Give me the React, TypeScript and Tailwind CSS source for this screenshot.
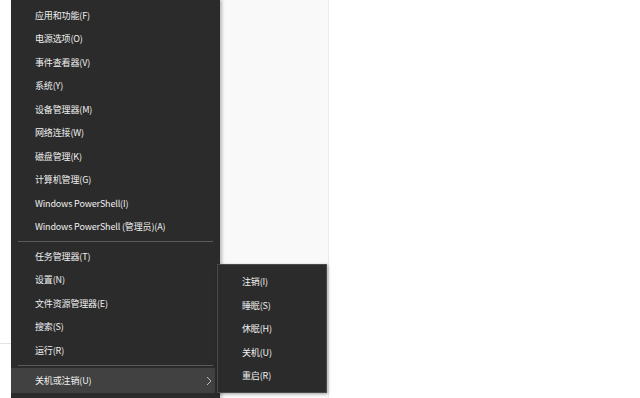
import React from "react";

const mainItems1 = [
  "应用和功能(F)",
  "电源选项(O)",
  "事件查看器(V)",
  "系统(Y)",
  "设备管理器(M)",
  "网络连接(W)",
  "磁盘管理(K)",
  "计算机管理(G)",
  "Windows PowerShell(I)",
  "Windows PowerShell (管理员)(A)",
];
const mainItems2 = ["任务管理器(T)", "设置(N)", "文件资源管理器(E)", "搜索(S)", "运行(R)"];
const subItems = ["注销(I)", "睡眠(S)", "休眠(H)", "关机(U)", "重启(R)"];

const font = { fontFamily: '"Noto Sans CJK SC", "Noto Sans", sans-serif' };

function Row({ label }: { label: string }) {
  return (
    <div className="h-[23.5px] flex items-center pl-[24px] text-[9px] tracking-[-0.15px] text-[#f0f0f0] whitespace-nowrap">
      {label}
    </div>
  );
}

function Sep() {
  return (
    <div className="h-[6px] flex items-center pl-[7px] pr-[7px]">
      <div className="h-px w-full bg-[#5a5a5a]" />
    </div>
  );
}

export default function App() {
  return (
    <div className="relative w-[640px] h-[398px] overflow-hidden bg-white" style={font}>
      <div className="flex h-full">
        <div className="w-[11px] h-full bg-white flex flex-col">
          <div className="h-[343px]" />
          <div className="h-px bg-[#e3e3e3]" />
        </div>
        <div className="w-[209px] h-full bg-[#2b2b2b] pt-[3.5px] flex flex-col shadow-[2px_0_3px_rgba(0,0,0,0.25)] z-10">
          {mainItems1.map((l) => (
            <Row key={l} label={l} />
          ))}
          <Sep />
          {mainItems2.map((l) => (
            <Row key={l} label={l} />
          ))}
          <Sep />
          <div className="h-[25px] mr-[5px] bg-[#414141] flex items-center justify-between pl-[24px] pr-[3px] text-[9px] tracking-[-0.15px] text-[#f0f0f0] whitespace-nowrap">
            <span>关机或注销(U)</span>
            <svg width="6" height="10" viewBox="0 0 6 10" fill="none">
              <path d="M1 1 L5 5 L1 9" stroke="#c8c8c8" strokeWidth="0.9" />
            </svg>
          </div>
        </div>
        <div className="w-[109px] h-full bg-[#f9f9f9] border-r border-[#ececec]" />
        <div className="flex-1 h-full bg-white" />
      </div>
      <div className="absolute left-[217px] top-[264px] w-[110px] h-[129px] bg-[#2b2b2b] border border-[#4a4a4a] pt-[5px] shadow-[1px_1px_3px_rgba(0,0,0,0.35)] z-20">
        {subItems.map((l) => (
          <div key={l} className="h-[23.5px] flex items-center pl-[24px] text-[9px] tracking-[-0.15px] text-[#f0f0f0] whitespace-nowrap">
            {l}
          </div>
        ))}
      </div>
    </div>
  );
}
